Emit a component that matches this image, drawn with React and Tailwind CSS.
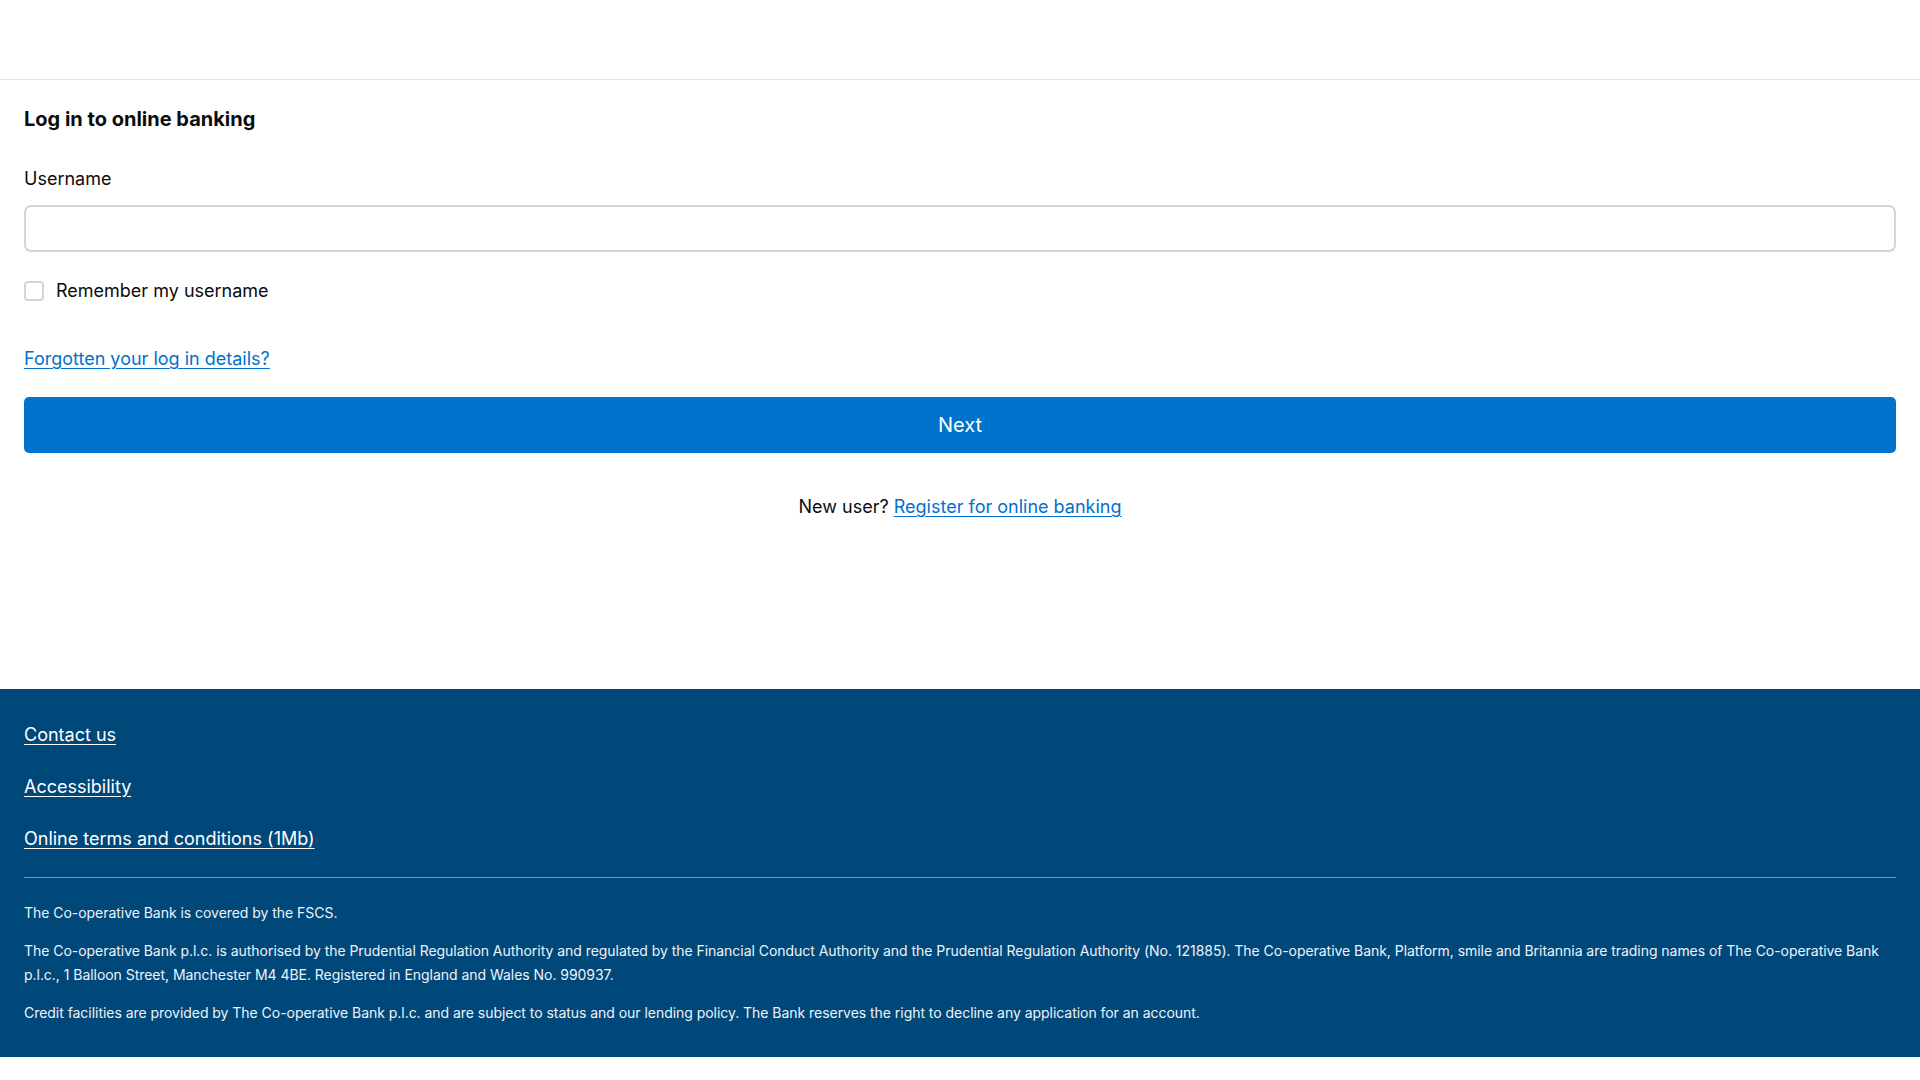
export default function App() {
  return (
    <div className="min-h-screen bg-white text-[#0c0c0c]" style={{ fontFamily: "Inter, 'Noto Sans', sans-serif" }}>
      <header className="h-[80px] border-b border-[#e4e5ea]" />
      <main className="px-6 pt-[25px] pb-[168px]">
        <h1 className="text-[20px] leading-[28px] font-bold">Log in to online banking</h1>
        <label className="block mt-[32px] text-[18px] leading-[28px]">Username</label>
        <input
          type="text"
          className="mt-[12px] block w-full h-[47px] border-2 border-[#d2d5da] rounded-[7px] px-3 text-[18px] outline-none"
        />
        <label className="mt-[25px] flex items-center gap-[12px] text-[18px] leading-[28px]">
          <span className="w-[20px] h-[20px] border-2 border-[#d2d5da] rounded-[4px] bg-white" />
          <span>Remember my username</span>
        </label>
        <a href="#" className="block mt-[40px] text-[18px] leading-[28px] text-[#0071cc] underline underline-offset-[3px] w-fit">
          Forgotten your log in details?
        </a>
        <button className="mt-[24px] w-full h-[56px] bg-[#0073cd] rounded-[5px] text-white text-[20px] font-normal">
          Next
        </button>
        <p className="mt-[40px] text-center text-[18px] leading-[28px]">
          New user?{" "}
          <a href="#" className="text-[#0071cc] underline underline-offset-[3px]">Register for online banking</a>
        </p>
      </main>
      <footer className="bg-[#00487a] text-white px-6 pt-[32px] pb-[32px]">
        <div className="flex flex-col gap-[24px] text-[18px] leading-[28px]">
          <a href="#" className="underline underline-offset-[3px] w-fit">Contact us</a>
          <a href="#" className="underline underline-offset-[3px] w-fit">Accessibility</a>
          <a href="#" className="underline underline-offset-[3px] w-fit">Online terms and conditions (1Mb)</a>
        </div>
        <div className="mt-[24px] border-t border-[#5a9bd8]" />
        <div className="mt-[23px] flex flex-col gap-[14px] text-[14px] leading-[24px] tracking-[-0.04px] text-[#eef3f8]">
          <p>The Co-operative Bank is covered by the FSCS.</p>
          <p>
            The Co-operative Bank p.l.c. is authorised by the Prudential Regulation Authority and regulated by the Financial Conduct Authority and the Prudential Regulation Authority (No. 121885). The Co-operative Bank, Platform, smile and Britannia are trading names of The Co-operative Bank p.l.c., 1 Balloon Street, Manchester M4 4BE. Registered in England and Wales No. 990937.
          </p>
          <p>
            Credit facilities are provided by The Co-operative Bank p.l.c. and are subject to status and our lending policy. The Bank reserves the right to decline any application for an account.
          </p>
        </div>
      </footer>
    </div>
  );
}
